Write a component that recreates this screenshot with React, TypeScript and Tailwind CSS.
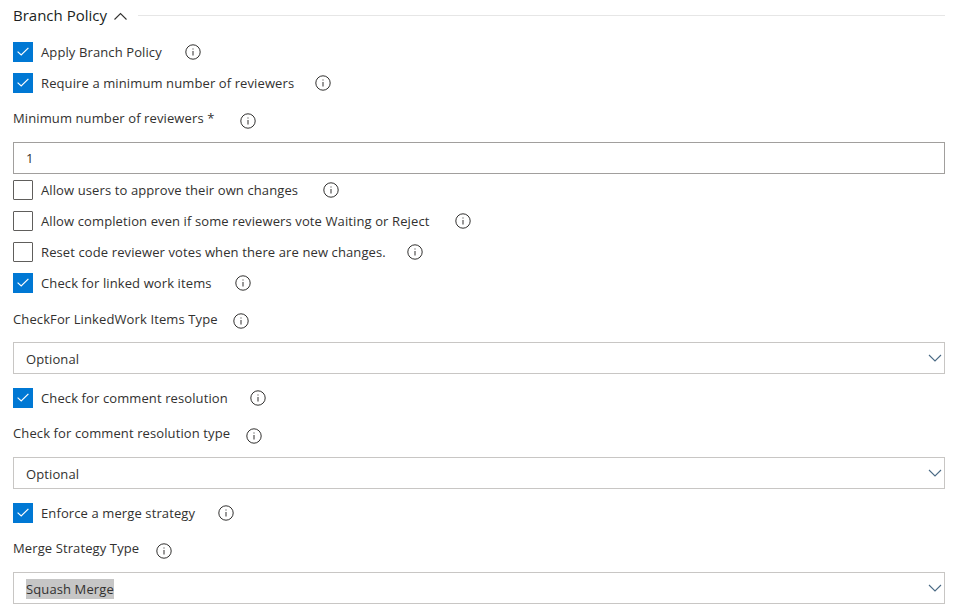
import React from "react";

const Info = ({ className = "" }: { className?: string }) => (
  <svg width="16" height="16" viewBox="0 0 16 16" className={`shrink-0 ${className}`} fill="none">
    <circle cx="8" cy="8" r="7.2" stroke="#323130" strokeWidth="1" />
    <rect x="7.5" y="7" width="1" height="4.5" fill="#323130" />
    <rect x="7.5" y="4.5" width="1" height="1" fill="#323130" />
  </svg>
);

const Check = ({ label, checked, gap, className = "" }: { label: string; checked?: boolean; gap: string; className?: string }) => (
  <div className={`flex h-5 items-center ${className}`}>
    <div className={`flex h-5 w-5 shrink-0 items-center justify-center ${checked ? "bg-[#0078d4]" : "border border-[#605e5c] rounded-[1px] bg-white"}`}>
      {checked && (
        <svg width="12" height="10" viewBox="0 0 12 10" fill="none">
          <path d="M0.6 4.6 L4.2 8 L11.4 0.8" stroke="white" strokeWidth="1.2" />
        </svg>
      )}
    </div>
    <span className="ml-2 whitespace-nowrap">{label}</span>
    <Info className={gap} />
  </div>
);

const Label = ({ text, gap, className = "" }: { text: string; gap: string; className?: string }) => (
  <div className={`flex h-5 items-center ${className}`}>
    <span className="whitespace-nowrap">{text}</span>
    <Info className={gap} />
  </div>
);

const Select = ({ value, highlight, className = "" }: { value: string; highlight?: boolean; className?: string }) => (
  <div className={`flex h-8 items-center justify-between border border-[#c8c6c4] bg-white pl-3 pr-px ${className}`}>
    <span className={highlight ? "mt-px bg-[#c6c6c6] leading-[20px]" : "mt-px"}>{value}</span>
    <svg width="16" height="16" viewBox="0 0 16 16" fill="none">
      <path d="M2 5 L8 11 L14 5" stroke="#4a6a85" strokeWidth="1.1" />
    </svg>
  </div>
);

export default function App() {
  return (
    <div className="h-[609px] w-[958px] overflow-hidden bg-white pl-[13px] pr-[13px] text-[13px] leading-5 tracking-[0.11px] text-[#323130] [font-family:'Open_Sans','Noto_Sans',sans-serif]">
      <div className="flex h-[30px] items-center">
        <span className="text-[15px] tracking-normal text-[#201f1e]">Branch Policy</span>
        <svg width="16" height="16" viewBox="0 0 16 16" fill="none" className="ml-[6px]">
          <path d="M1.5 12.5 L7.5 6.5 L13.5 12.5" stroke="#323130" strokeWidth="1.1" />
        </svg>
        <div className="ml-[9px] h-px flex-1 bg-[#e6e6e6]" />
      </div>
      <Check className="mt-3" label="Apply Branch Policy" checked gap="ml-[23px]" />
      <Check className="mt-[11px]" label="Require a minimum number of reviewers" checked gap="ml-[21px]" />
      <Label className="mt-[15px]" text="Minimum number of reviewers *" gap="ml-[26px] mt-[5px]" />
      <div className="mt-[14px] flex h-8 items-center border border-[#a19f9d] pl-3">1</div>
      <Check className="mt-[6px]" label="Allow users to approve their own changes" gap="ml-[25px]" />
      <Check className="mt-[11px]" label="Allow completion even if some reviewers vote Waiting or Reject" gap="ml-[26px]" />
      <Check className="mt-[11px]" label="Reset code reviewer votes when there are new changes." gap="ml-[21px]" />
      <Check className="mt-[11px]" label="Check for linked work items" checked gap="ml-[23px]" />
      <Label className="mt-[16px]" text="CheckFor LinkedWork Items Type" gap="ml-[15px] mt-[3px]" />
      <Select className="mt-[13px]" value="Optional" />
      <Check className="mt-[14px]" label="Check for comment resolution" checked gap="ml-[22px]" />
      <Label className="mt-[15px]" text="Check for comment resolution type" gap="ml-4 mt-[5px]" />
      <Select className="mt-[14px]" value="Optional" />
      <Check className="mt-[14px]" label="Enforce a merge strategy" checked gap="ml-[23px]" />
      <Label className="mt-[15px]" text="Merge Strategy Type" gap="ml-[17px] mt-[5px]" />
      <Select className="mt-[14px]" value="Squash Merge" highlight />
    </div>
  );
}
